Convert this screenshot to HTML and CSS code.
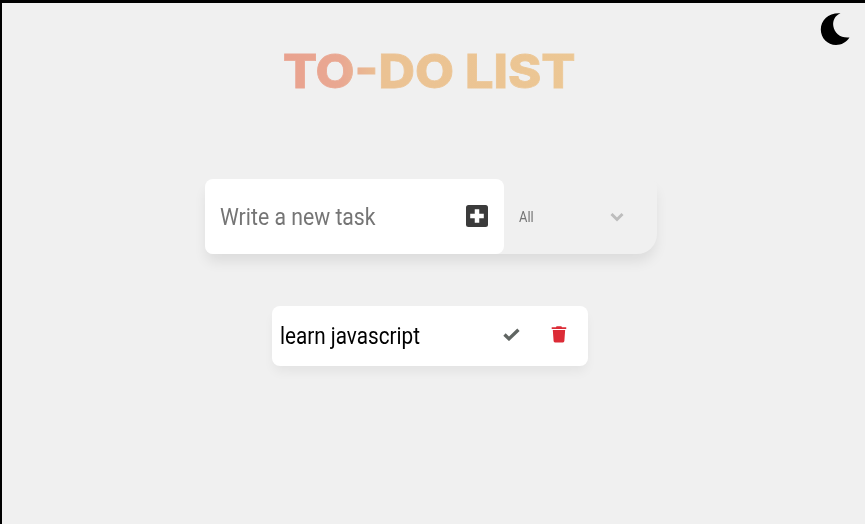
FILE: index.html
```html
<!DOCTYPE html>
<html lang="en">
<head>
<meta charset="utf-8">
<title>To-Do List</title>
<link rel="stylesheet" href="styles.css">
</head>
<body>
<button class="theme" aria-label="Dark mode"><svg viewBox="0 0 30 34"><path d="M20.5 1.2C15 3.500 12.500 8.500 13.300 14C14.300 21 20.500 26.400 29.500 25.500C26.300 30.300 21.300 33 16 33C7.500 33 .8 26 .8 17.500C.8 8 8.500 .5 20.500 1.200Z"/></svg></button>
<header><h1>TO-DO LIST</h1></header>
<form class="entry">
  <div class="field"><span class="placeholder">Write a new task</span>
    <svg class="plus" viewBox="0 0 22 22"><rect width="22" height="22" rx="2.500"/><path d="M11 4.200V17.800M4.200 11H17.800"/></svg>
  </div>
  <div class="filter"><span class="choice">All</span>
    <svg class="chevron" viewBox="0 0 14 10"><path d="M1.500 2L7 7.500L12.500 2"/></svg>
  </div>
</form>
<ul class="tasks">
  <li class="task"><span class="name">learn javascript</span>
    <svg class="check" viewBox="0 0 17 13"><path d="M1.500 6.500L6 10.800L15.500 1.700"/></svg>
    <svg class="trash" viewBox="0 0 16 17"><path d="M.7 1.200H5L5.600 .3H10.400L11 1.200H15.300V3H.7ZM1.800 4H14.200L13.400 15Q13.300 16.500 12 16.500H4Q2.700 16.500 2.600 15Z"/></svg>
  </li>
</ul>
</body>
</html>
```
FILE: styles.css
```css
* { box-sizing: border-box; }
body {
  margin: 0;
  height: 524px;
  overflow: hidden;
  background: #f0f0f0;
  border-top: 3px solid #000;
  border-left: 2px solid #000;
  font-family: Roboto, sans-serif;
}
.theme {
  position: absolute;
  top: 12px;
  right: 15px;
  width: 30px;
  height: 34px;
  padding: 0;
  border: 0;
  background: none;
}
.theme svg { display: block; width: 30px; height: 34px; }
header { height: 176px; padding: 39px 0 0 281px; }
h1 {
  display: inline-block;
  margin: 0;
  font: 800 47px/58px Inter, sans-serif;
  white-space: nowrap;
  transform-origin: left;
  transform: scaleX(1.075);
  background: linear-gradient(90deg, #e9a28f 0, #e9a892 20%, #ebc293 34%, #ecc794 100%);
  -webkit-background-clip: text;
  background-clip: text;
  color: transparent;
  -webkit-text-stroke: .8px transparent;
}
.entry {
  display: flex;
  width: 452px;
  height: 75px;
  margin: 0 0 0 203px;
  border-radius: 8px 8px 20px 8px;
  background: #f0f0f0;
  box-shadow: 0 9px 14px -2px rgba(0, 0, 0, .09);
}
.field {
  display: flex;
  align-items: center;
  justify-content: space-between;
  width: 299px;
  padding: 0 16px 0 15px;
  border-radius: 8px;
  background: #fff;
}
.placeholder, .name, .choice { white-space: nowrap; transform-origin: left; }
.placeholder { font-size: 24px; color: #757575; transform: scaleX(.884); }
.plus { width: 22px; height: 22px; margin-top: -1px; fill: #3b3b3b; }
.plus path { stroke: #fff; stroke-width: 4.500; }
.filter {
  display: flex;
  align-items: center;
  justify-content: space-between;
  width: 153px;
  padding: 0 33px 0 15px;
}
.choice { font-size: 15px; color: #757575; transform: scaleX(.86); }
.chevron { width: 14px; height: 10px; }
.chevron path { fill: none; stroke: #bdbdbd; stroke-width: 3; }
.tasks { margin: 52px 0 0 270px; padding: 0; list-style: none; }
.task {
  display: flex;
  align-items: center;
  width: 316px;
  height: 60px;
  padding: 0 21px 0 8px;
  border-radius: 8px;
  background: #fff;
  box-shadow: 0 7px 12px -2px rgba(0, 0, 0, .06);
}
.name { width: 224px; font-size: 24px; color: #000; transform: scaleX(.862); }
.check { width: 17px; height: 13px; margin-top: -3px; }
.check path { fill: none; stroke: #606562; stroke-width: 3.400; }
.trash { width: 16px; height: 17px; margin: -3px 0 0 31px; fill: #dc2b36; }
```
